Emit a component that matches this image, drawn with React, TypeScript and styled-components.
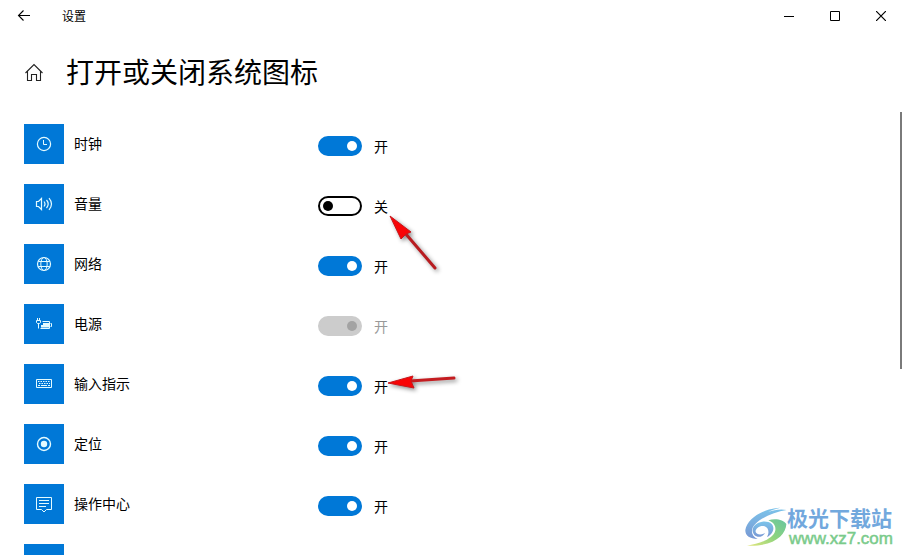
import React, { useState } from "react";
import styled, { createGlobalStyle } from "styled-components";

const GlobalStyle = createGlobalStyle`
  * { box-sizing: border-box; }
  body {
    margin: 0;
    background: #fff;
    color: #000;
    font-family: "Noto Sans CJK SC", "Noto Sans", sans-serif;
  }
`;

const Window = styled.div`
  position: relative;
  display: flex;
  flex-direction: column;
  height: 100vh;
  overflow: hidden;
  background: #fff;
`;

const TitleBar = styled.header`
  display: flex;
  align-items: center;
  height: 32px;
  flex: none;
`;

const BarButton = styled.button<{ $width: number }>`
  display: flex;
  align-items: center;
  justify-content: center;
  width: ${(p) => p.$width}px;
  height: 32px;
  padding: 0;
  border: 0;
  background: none;
  color: #000;
`;

const AppName = styled.span`
  flex: 1;
  padding-left: 14px;
  font-size: 12px;
  line-height: 32px;
`;

const Heading = styled.div`
  display: flex;
  align-items: center;
  flex: none;
  height: 80px;
  padding-left: 24px;
  gap: 22px;
`;

const HomeLink = styled.a`
  display: flex;
  color: #222;
`;

const Title = styled.h1`
  margin: 0;
  padding-bottom: 2px;
  font-size: 28px;
  line-height: 40px;
  font-weight: 400;
`;

const Body = styled.main`
  display: flex;
  flex: 1;
  min-height: 0;
`;

const List = styled.ul`
  display: flex;
  flex: 1;
  flex-direction: column;
  gap: 20px;
  margin: 0;
  padding: 12px 24px;
  list-style: none;
  overflow: hidden;
`;

const Row = styled.li`
  display: grid;
  grid-template-columns: 40px 234px auto;
  align-items: center;
  justify-content: start;
  column-gap: 10px;
  flex: none;
  height: 40px;
`;

const Tile = styled.span`
  display: flex;
  align-items: center;
  justify-content: center;
  width: 40px;
  height: 40px;
  background: #0078d7;
  color: #e4fbff;
`;

const Name = styled.label`
  padding-bottom: 2px;
  font-size: 14px;
  line-height: 20px;
`;

const Setting = styled.span`
  position: relative;
  display: flex;
  align-items: center;
  gap: 12px;
  padding-top: 4px;
`;

const Switch = styled.input`
  appearance: none;
  display: flex;
  align-items: center;
  width: 44px;
  height: 20px;
  margin: 0;
  padding: 0 3px;
  border: 2px solid #000;
  border-radius: 10px;
  background: #fff;

  &::before {
    content: "";
    width: 10px;
    height: 10px;
    border-radius: 50%;
    background: #000;
  }
  &:checked {
    justify-content: flex-end;
    border-color: #0078d7;
    background: #0078d7;
  }
  &:checked::before { background: #fff; }
  &:disabled {
    border-color: #ccc;
    background: #ccc;
  }
  &:disabled::before { background: #a3a3a3; }
`;

const State = styled.span<{ $dim: boolean }>`
  font-size: 14px;
  line-height: 20px;
  color: ${(p) => (p.$dim ? "#999" : "#000")};
`;

const Pointer = styled.svg`
  position: absolute;
  left: 64px;
  top: 0;
  overflow: visible;
  pointer-events: none;
  filter: drop-shadow(2px 2px 2px rgba(0, 0, 0, 0.45));
`;

const ScrollTrack = styled.div`
  flex: none;
  width: 4px;
`;

const ScrollThumb = styled.div`
  width: 2px;
  height: 58%;
  background: #7a7a7a;
`;

const Watermark = styled.div`
  position: absolute;
  right: 11px;
  bottom: 6px;
  display: flex;
  align-items: center;
`;

const Brand = styled.div`
  display: flex;
  flex-direction: column;
`;

const BrandName = styled.span`
  font-size: 21px;
  line-height: 24px;
  font-weight: 700;
  color: #72a8dd;
`;

const BrandUrl = styled.span`
  padding-left: 2px;
  font-family: "Liberation Sans", Arial, sans-serif;
  font-size: 17px;
  line-height: 20px;
  color: #7acb8b;
  -webkit-text-stroke: 0.5px #7acb8b;
`;

const Glyph = ({ children, size = 16 }: { children: React.ReactNode; size?: number }) => (
  <svg width={size} height={size} viewBox={`0 0 ${size} ${size}`} fill="none" stroke="currentColor" aria-hidden="true">
    {children}
  </svg>
);

const icons: Record<string, React.ReactNode> = {
  clock: (
    <Glyph>
      <circle cx="8" cy="8" r="6.6" strokeWidth="1.2" />
      <path d="M7.5 4v4.5H11" />
    </Glyph>
  ),
  volume: (
    <Glyph size={18}>
      <path d="M1.5 6.5h2l3-3v11l-3-3h-2zM9 6.5q2 2.5 0 5M11.5 5q3.4 4 0 8M14 3.2q5 5.8 0 11.6" strokeWidth="1.2" />
    </Glyph>
  ),
  network: (
    <Glyph>
      <circle cx="8" cy="8" r="6.5" strokeWidth="1.2" />
      <ellipse cx="8" cy="8" rx="3.2" ry="6.5" />
      <path d="M2.3 5.5h11.4M2.3 10.5h11.4" />
    </Glyph>
  ),
  power: (
    <Glyph>
      <path d="M6.5 5.5h7v7h-9M14.500 7.500h1v3h-1M1.500 2v2M3.500 2v2M.5 4.500h4v2l-1 1h-2l-1-1zM2.500 7.500v5" />
      <path d="M7 7h6v4.500H5V9h2z" fill="currentColor" stroke="none" />
    </Glyph>
  ),
  keyboard: (
    <Glyph>
      <path d="M.5 3.5h15v8H.5z" />
      <path d="M2 5.5h12M3 7.5h11" strokeDasharray="1.5 1" />
      <path d="M2 9.5h2M5 9.5h6M12 9.5h2" />
    </Glyph>
  ),
  location: (
    <Glyph>
      <circle cx="8" cy="8" r="6.5" strokeWidth="1.4" />
      <circle cx="8" cy="8" r="3.2" fill="currentColor" stroke="none" />
    </Glyph>
  ),
  action: (
    <Glyph>
      <path d="M.5 1.5h15v12h-5L8 16l-2.5-2.5h-5zM3 4.5h10M3 7.5h10M3 10.5h7" />
    </Glyph>
  ),
};

type Item = { id: string; name?: string; on?: boolean; disabled?: boolean; pointer?: string };

const items: Item[] = [
  { id: "clock", name: "时钟", on: true },
  { id: "volume", name: "音量", on: false, pointer: "lower" },
  { id: "network", name: "网络", on: true },
  { id: "power", name: "电源", on: true, disabled: true },
  { id: "keyboard", name: "输入指示", on: true, pointer: "level" },
  { id: "location", name: "定位", on: true },
  { id: "action", name: "操作中心", on: true },
  { id: "next" },
];

const pointers: Record<string, React.ReactNode> = {
  lower: (
    <Pointer width="60" height="80" viewBox="0 0 60 80" aria-hidden="true">
      <path d="M23 41L53 76" stroke="#b81c20" strokeWidth="3" strokeLinecap="round" />
      <path d="M8 24L29 40L24 42L19 47Z" fill="#f80406" stroke="#c8161a" />
    </Pointer>
  ),
  level: (
    <Pointer width="80" height="30" viewBox="0 0 80 30" aria-hidden="true">
      <path d="M28 9L72 6" stroke="#c41c20" strokeWidth="3" strokeLinecap="round" />
      <path d="M6 11L31 4L29 9L32 16Z" fill="#f80406" stroke="#c8161a" />
    </Pointer>
  ),
};

const SettingRow = ({ item }: { item: Item }) => {
  const [on, setOn] = useState(!!item.on);
  return (
    <Row>
      <Tile>{icons[item.id]}</Tile>
      {item.name && (
        <>
          <Name htmlFor={item.id}>{item.name}</Name>
          <Setting>
            <Switch
              id={item.id}
              type="checkbox"
              role="switch"
              checked={on}
              disabled={item.disabled}
              onChange={(e) => setOn(e.target.checked)}
            />
            <State $dim={!!item.disabled}>{on ? "开" : "关"}</State>
            {item.pointer && pointers[item.pointer]}
          </Setting>
        </>
      )}
    </Row>
  );
};

const BrandLogo = () => (
  <svg width="42" height="42" viewBox="14 18 126 126" aria-hidden="true">
    <defs>
      <linearGradient id="sky" x1="0" y1="0" x2="0" y2="1">
        <stop offset="0" stopColor="#7cc4ea" />
        <stop offset="1" stopColor="#7898d4" />
      </linearGradient>
      <linearGradient id="leaf" x1="0" y1="1" x2="1" y2="0">
        <stop offset="0" stopColor="#e3e67c" />
        <stop offset="0.5" stopColor="#8ed47e" />
        <stop offset="1" stopColor="#68c5a0" />
      </linearGradient>
    </defs>
    <path d="M120 23C70 25 20 56 15 90C14 106 28 117 52 117C32 108 29 88 45 72C65 50 105 36 139 30C124 26 100 29 84 36C98 28 110 26 120 23Z" fill="url(#sky)" />
    <path d="M37 88C42 66 77 57 94 72C106 86 95 104 80 111C87 99 86 84 73 79C59 75 44 86 46 96C49 104 62 106 74 99C67 113 50 113 42 105C38 99 36 94 37 88Z" fill="url(#sky)" />
    <path d="M84 61C106 54 130 60 138 72C137 106 98 141 20 137C58 131 100 117 105 91C107 76 98 66 84 61Z" fill="url(#leaf)" />
  </svg>
);

export default function App() {
  return (
    <Window>
      <GlobalStyle />
      <TitleBar>
        <BarButton $width={48} aria-label="返回">
          <Glyph>
            <path d="M14 7.5H2.5M7.5 2.5l-5 5 5 5" strokeWidth="1.1" />
          </Glyph>
        </BarButton>
        <AppName>设置</AppName>
        <BarButton $width={46} aria-label="最小化">
          <Glyph size={10}><path d="M0 5.5h10" /></Glyph>
        </BarButton>
        <BarButton $width={46} aria-label="最大化">
          <Glyph size={10}><path d="M.5 .5h9v9h-9z" /></Glyph>
        </BarButton>
        <BarButton $width={46} aria-label="关闭">
          <Glyph size={10}><path d="M0 0l10 10M10 0L0 10" strokeWidth="1.2" /></Glyph>
        </BarButton>
      </TitleBar>
      <Heading>
        <HomeLink href="#" aria-label="主页">
          <Glyph size={20}>
            <path d="M1.5 11L10 2.5l8.5 8.5M3.5 9.5v9h4v-6h5v6h4V9.5" strokeWidth="1.1" />
          </Glyph>
        </HomeLink>
        <Title>打开或关闭系统图标</Title>
      </Heading>
      <Body>
        <List>
          {items.map((item) => (
            <SettingRow key={item.id} item={item} />
          ))}
        </List>
        <ScrollTrack>
          <ScrollThumb />
        </ScrollTrack>
      </Body>
      <Watermark>
        <BrandLogo />
        <Brand>
          <BrandName>极光下载站</BrandName>
          <BrandUrl>www.xz7.com</BrandUrl>
        </Brand>
      </Watermark>
    </Window>
  );
}
